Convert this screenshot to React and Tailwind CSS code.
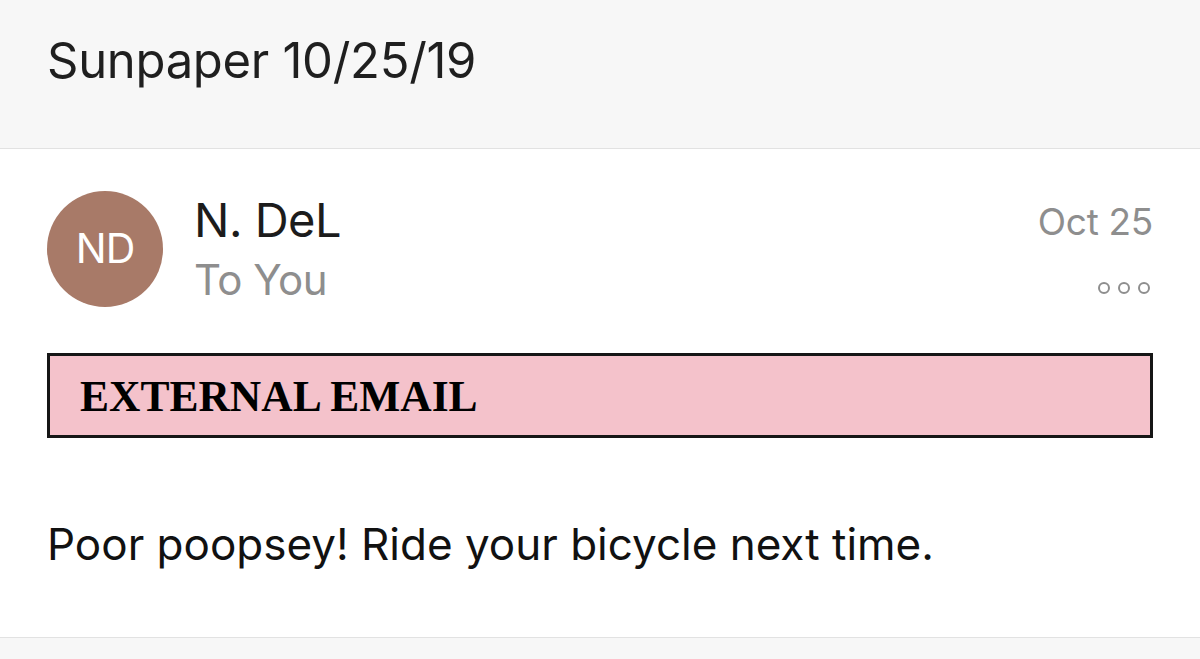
const MoreDots = () => (
  <svg width="54" height="14" viewBox="0 0 54 14" fill="none" stroke="#8e8e8e" strokeWidth="2">
    <circle cx="7" cy="7" r="5" />
    <circle cx="27" cy="7" r="5" />
    <circle cx="47" cy="7" r="5" />
  </svg>
);

const App = () => {
  return (
    <div className="w-[1200px] h-[659px] overflow-hidden bg-[#f7f7f7] flex flex-col font-['Inter',sans-serif]">
      {/* subject bar */}
      <div className="h-[149px] shrink-0 border-b border-[#e2e2e2] pl-[47px] pt-[31px]">
        <h1 className="text-[49px] leading-[60px] text-[#1f1f1f] tracking-[-0.3px]">Sunpaper 10/25/19</h1>
      </div>

      {/* message */}
      <div className="h-[489px] shrink-0 bg-white border-b border-[#e2e2e2] px-[47px] pt-[42px]">
        <div className="flex items-start h-[116px]">
          <div className="w-[116px] h-[116px] rounded-full bg-[#a87a68] flex items-center justify-center shrink-0">
            <span className="text-white text-[41px] tracking-[-1px]">ND</span>
          </div>
          <div className="ml-[31px] flex flex-col">
            <span className="text-[47px] leading-[58px] text-[#1c1c1c] tracking-[-0.5px]">N. DeL</span>
            <span className="mt-[4px] text-[42px] leading-[54px] text-[#8e8e8e] tracking-[-0.5px]">To You</span>
          </div>
          <div className="ml-auto flex flex-col items-end pt-[9px]">
            <span className="text-[37px] leading-[44px] text-[#8e8e8e] tracking-[-0.3px]">Oct 25</span>
            <div className="mt-[37px] mr-[2px]">
              <MoreDots />
            </div>
          </div>
        </div>

        <div className="mt-[46px] h-[85px] border-[3px] border-[#161616] bg-[#f4c2cb] pl-[30px] flex items-center">
          <span className="font-['Liberation_Serif',serif] font-bold text-[43.5px] leading-none text-black pt-[2px]">
            EXTERNAL EMAIL
          </span>
        </div>

        <p className="mt-[79px] text-[44px] leading-[54px] text-[#111]">
          Poor poopsey! Ride your bicycle next time.
        </p>
      </div>

      <div className="flex-1" />
    </div>
  );
};

export default App;
